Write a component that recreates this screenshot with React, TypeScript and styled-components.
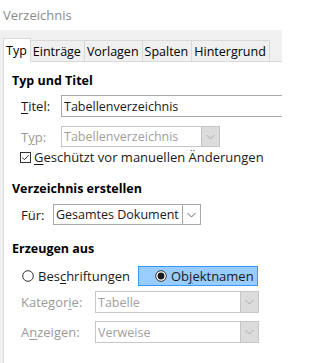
import React from 'react';
import styled, { createGlobalStyle } from 'styled-components';

const GlobalStyle = createGlobalStyle`
  html, body {
    margin: 0;
    padding: 0;
    background: #ffffff;
  }
  body {
    font-family: 'Open Sans', 'Noto Sans', sans-serif;
    font-size: 13px;
    color: #1a1a1a;
  }
`;

const Dialog = styled.div`
  width: 282px;
  height: 363px;
  display: flex;
  flex-direction: column;
  background: #ffffff;
  overflow: hidden;
`;

const TitleBar = styled.div`
  height: 30px;
  display: flex;
  align-items: center;
  padding-left: 3px;
  font-size: 13px;
  color: #8b8b8b;
`;

const Body = styled.div`
  flex: 1;
  display: flex;
  flex-direction: column;
  background: #f0f0f0;
  padding: 8px 0 0 3px;
`;

const TabBar = styled.div`
  display: flex;
  align-items: flex-end;
  height: 24px;
`;

const Tab = styled.div<{ $active?: boolean }>`
  height: ${(p) => (p.$active ? '24px' : '22px')};
  display: flex;
  align-items: center;
  padding: 0 3px 0 2px;
  box-sizing: border-box;
  background: ${(p) => (p.$active ? '#ffffff' : '#f0f0f0')};
  border: 1px solid #d9d9d9;
  border-bottom: ${(p) => (p.$active ? 'none' : '1px solid #d9d9d9')};
  margin-left: ${(p) => (p.$active ? '0' : '-1px')};
  color: #000;
  font-size: 12.5px;
  position: relative;
  z-index: ${(p) => (p.$active ? 1 : 0)};
`;

const TabRest = styled.div`
  flex: 1;
  border-bottom: 1px solid #d9d9d9;
`;

const Panel = styled.div`
  flex: 1;
  margin-top: -1px;
  background: #ffffff;
  border-left: 1px solid #d9d9d9;
  border-top: 1px solid #d9d9d9;
  padding: 11px 0 0 8px;
  display: flex;
  flex-direction: column;
`;

const Heading = styled.div<{ $mt?: number }>`
  font-weight: 700;
  font-size: 12.5px;
  line-height: 16px;
  color: #000;
  margin-top: ${(p) => p.$mt ?? 0}px;
`;

const Row = styled.div<{ $mt?: number; $h?: number }>`
  display: flex;
  align-items: center;
  height: ${(p) => p.$h ?? 22}px;
  margin-top: ${(p) => p.$mt ?? 0}px;
  padding-left: 9px;
`;

const Label = styled.span<{ $w: number; $disabled?: boolean }>`
  width: ${(p) => p.$w}px;
  flex: none;
  color: ${(p) => (p.$disabled ? '#9a9a9a' : '#1a1a1a')};
`;

const Key = styled.span`
  text-decoration: underline;
  text-underline-offset: 2px;
`;

const Field = styled.div<{ $w?: number; $disabled?: boolean }>`
  height: 100%;
  ${(p) => (p.$w ? `width: ${p.$w}px;` : 'flex: 1;')}
  box-sizing: border-box;
  display: flex;
  align-items: stretch;
  border: 1px solid ${(p) => (p.$disabled ? '#c6c6c6' : '#a8a8a8')};
  border-right: ${(p) => (p.$w ? undefined : 'none')};
  background: #ffffff;
`;

const FieldText = styled.div<{ $disabled?: boolean }>`
  flex: 1;
  display: flex;
  align-items: center;
  padding-left: 2px;
  font-size: 12.5px;
  color: ${(p) => (p.$disabled ? '#a0a0a0' : '#1a1a1a')};
  white-space: nowrap;
  overflow: hidden;
`;

const DropButton = styled.div<{ $disabled?: boolean }>`
  width: 18px;
  flex: none;
  display: flex;
  align-items: center;
  justify-content: center;
  box-sizing: border-box;
  border-left: 1px solid ${(p) => (p.$disabled ? '#c6c6c6' : '#a8a8a8')};
  background: ${(p) => (p.$disabled ? '#dcdcdc' : '#ffffff')};
`;

const CheckRow = styled.label<{ $mt?: number }>`
  display: flex;
  align-items: center;
  gap: 3px;
  height: 14px;
  margin-top: ${(p) => p.$mt ?? 0}px;
  padding-left: 8px;
  color: #1a1a1a;
`;

const RadioRow = styled.div<{ $mt?: number }>`
  display: flex;
  align-items: center;
  height: 20px;
  margin-top: ${(p) => p.$mt ?? 0}px;
  padding-left: 9px;
`;

const RadioItem = styled.div<{ $focused?: boolean; $w: number }>`
  width: ${(p) => p.$w}px;
  height: 100%;
  box-sizing: border-box;
  display: flex;
  align-items: center;
  gap: 4px;
  padding-left: ${(p) => (p.$focused ? '16px' : '0')};
  background: ${(p) => (p.$focused ? '#99ccff' : 'transparent')};
  border: 1px solid ${(p) => (p.$focused ? '#3399ff' : 'transparent')};
  color: #1a1a1a;
  white-space: nowrap;
`;

const Chevron = ({ disabled }: { disabled?: boolean }) => (
  <svg width="9" height="6" viewBox="0 0 9 6">
    <path
      d="M0.5 1 L4.5 5 L8.5 1"
      fill="none"
      stroke={disabled ? '#a8a8a8' : '#555'}
      strokeWidth="0.9"
    />
  </svg>
);

const CheckBox = () => (
  <svg width="11" height="11" viewBox="0 0 11 11">
    <rect x="0.5" y="0.5" width="10" height="10" fill="#fff" stroke="#333" />
    <path d="M2.3 5.6 L4.4 7.7 L8.7 3.2" fill="none" stroke="#333" strokeWidth="1" />
  </svg>
);

const Radio = ({ checked }: { checked?: boolean }) => (
  <svg width="12" height="12" viewBox="0 0 12 12">
    <circle cx="6" cy="6" r="5.3" fill="#fff" stroke="#333" strokeWidth="1" />
    {checked && <circle cx="6" cy="6" r="3.4" fill="#1a1a1a" />}
  </svg>
);

const Select = ({
  value,
  width,
  disabled,
}: {
  value: string;
  width: number;
  disabled?: boolean;
}) => (
  <Field $w={width} $disabled={disabled}>
    <FieldText $disabled={disabled}>{value}</FieldText>
    <DropButton $disabled={disabled}>
      <Chevron disabled={disabled} />
    </DropButton>
  </Field>
);

const App = () => {
  return (
    <>
      <GlobalStyle />
      <Dialog>
        <TitleBar>Verzeichnis</TitleBar>
        <Body>
          <TabBar>
            <Tab $active>Typ</Tab>
            <Tab>Einträge</Tab>
            <Tab>Vorlagen</Tab>
            <Tab>Spalten</Tab>
            <Tab>Hintergrund</Tab>
            <TabRest />
          </TabBar>
          <Panel>
            <Heading>Typ und Titel</Heading>
            <Row $mt={6}>
              <Label $w={40}>
                <Key>T</Key>itel:
              </Label>
              <Field>
                <FieldText>Tabellenverzeichnis</FieldText>
              </Field>
            </Row>
            <Row $mt={9} $h={21}>
              <Label $w={40} $disabled>
                T<Key>y</Key>p:
              </Label>
              <Select value="Tabellenverzeichnis" width={159} disabled />
            </Row>
            <CheckRow $mt={3}>
              <CheckBox />
              <span>
                <Key>G</Key>eschützt vor manuellen Änderungen
              </span>
            </CheckRow>
            <Heading $mt={17}>Verzeichnis erstellen</Heading>
            <Row $mt={7} $h={21}>
              <Label $w={32}>Für:</Label>
              <Select value="Gesamtes Dokument" width={148} />
            </Row>
            <Heading $mt={16}>Erzeugen aus</Heading>
            <RadioRow $mt={9}>
              <RadioItem $w={117}>
                <Radio />
                <span>
                  Bes<Key>c</Key>hriftungen
                </span>
              </RadioItem>
              <RadioItem $focused $w={120}>
                <Radio checked />
                <span>
                  Ob<Key>j</Key>ektnamen
                </span>
              </RadioItem>
            </RadioRow>
            <Row $mt={5}>
              <Label $w={74} $disabled>
                Kategor<Key>i</Key>e:
              </Label>
              <Select value="Tabelle" width={164} disabled />
            </Row>
            <Row $mt={8}>
              <Label $w={74} $disabled>
                A<Key>n</Key>zeigen:
              </Label>
              <Select value="Verweise" width={164} disabled />
            </Row>
          </Panel>
        </Body>
      </Dialog>
    </>
  );
};

export default App;
